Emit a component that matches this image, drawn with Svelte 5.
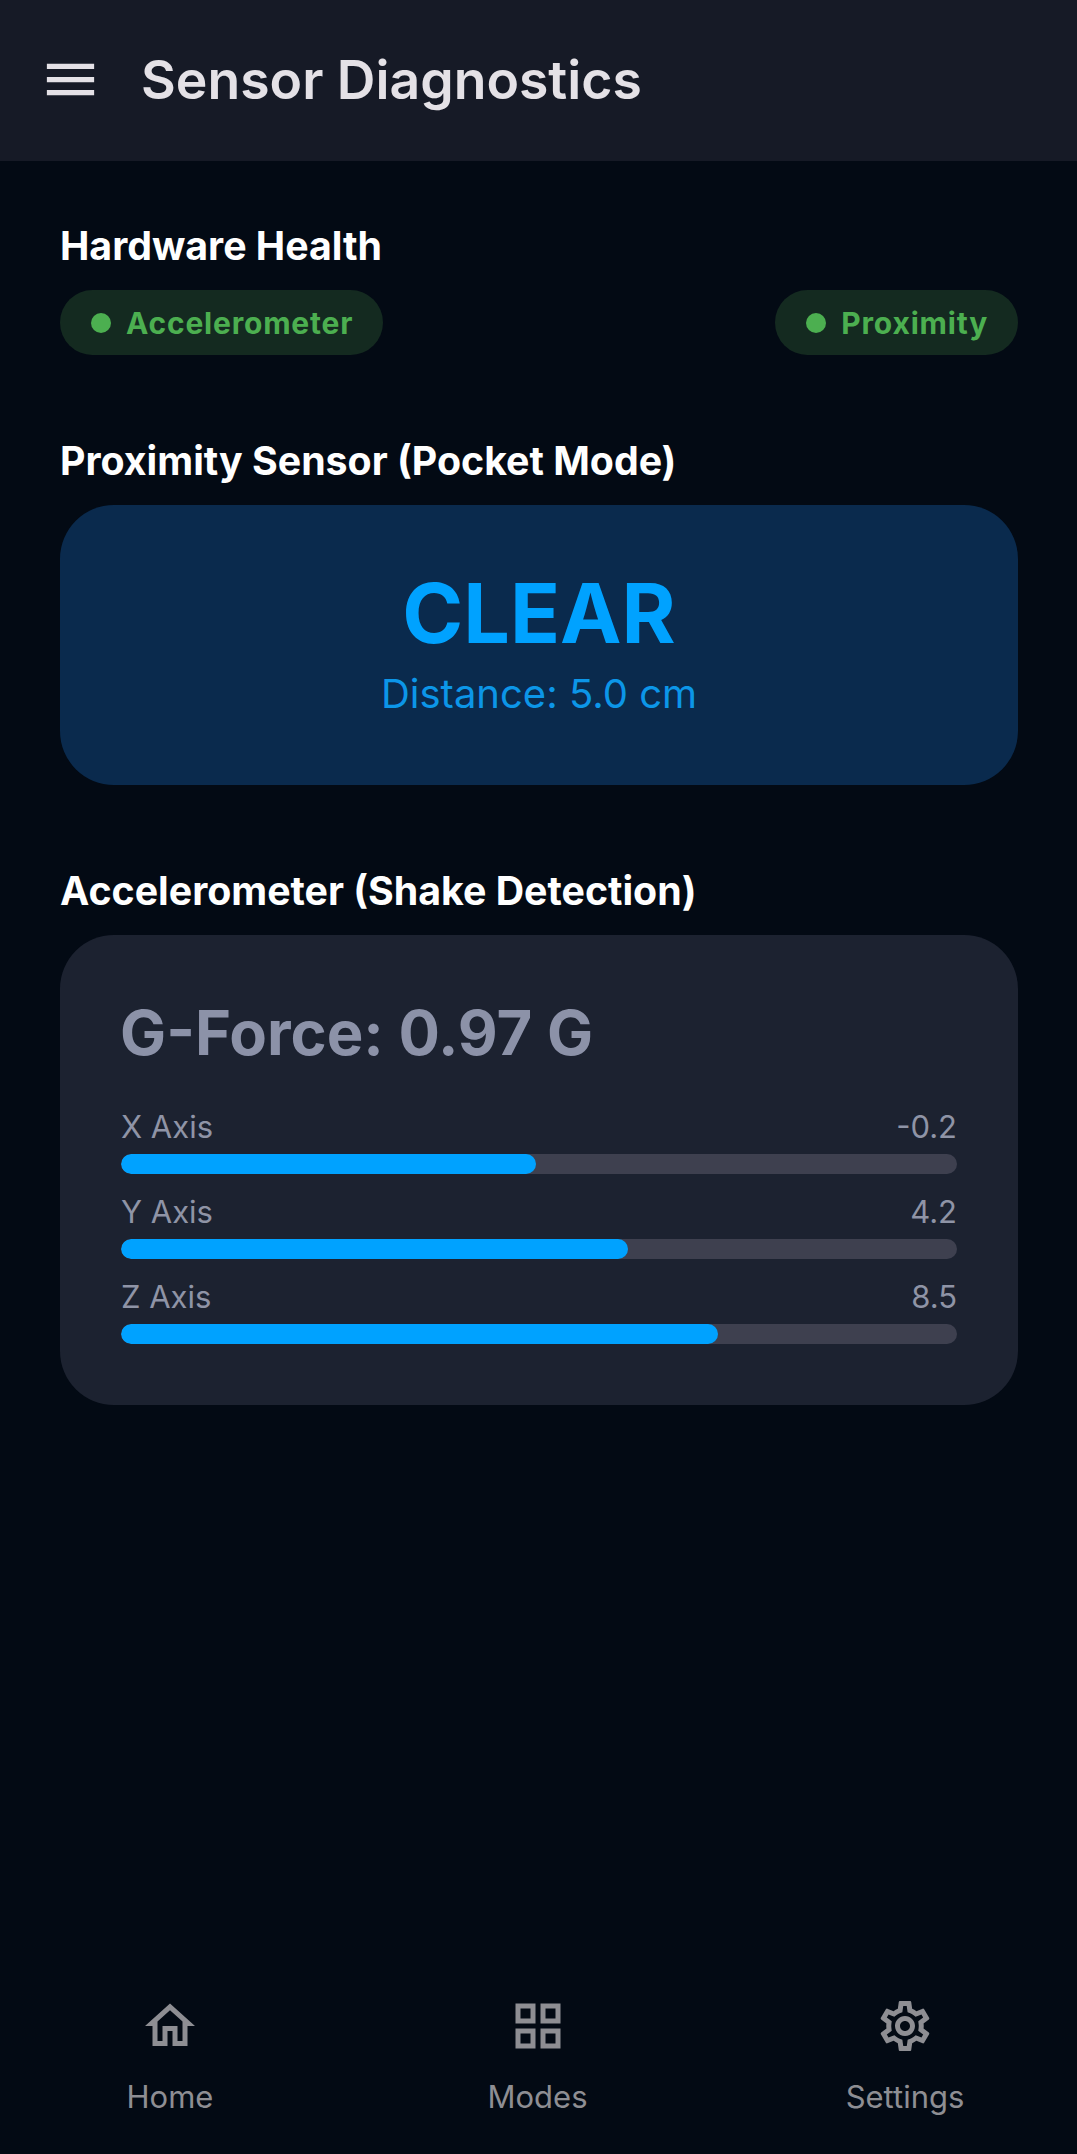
<script>
  const axes = [
    { name: 'X Axis', value: '-0.2', pct: 49.6 },
    { name: 'Y Axis', value: '4.2', pct: 60.6 },
    { name: 'Z Axis', value: '8.5', pct: 71.4 }
  ];
</script>

<div class="page">
  <header class="topbar">
    <svg class="menu" viewBox="0 0 24 24" aria-hidden="true">
      <path d="M3 18h18v-2H3v2zm0-5h18v-2H3v2zm0-7v2h18V6H3z" />
    </svg>
    <h1>Sensor Diagnostics</h1>
  </header>

  <main>
    <section class="health">
      <h2>Hardware Health</h2>
      <div class="pills">
        <div class="pill"><span class="dot"></span>Accelerometer</div>
        <div class="pill"><span class="dot"></span>Proximity</div>
      </div>
    </section>

    <section class="prox">
      <h2>Proximity Sensor (Pocket Mode)</h2>
      <div class="prox-card">
        <div class="state">CLEAR</div>
        <div class="distance">Distance: 5.0 cm</div>
      </div>
    </section>

    <section class="accel">
      <h2>Accelerometer (Shake Detection)</h2>
      <div class="accel-card">
        <div class="gforce">G-Force: 0.97 G</div>
        <div class="axes">
          {#each axes as a}
            <div class="axis">
              <div class="axis-row"><span>{a.name}</span><span>{a.value}</span></div>
              <div class="track"><div class="fill" style="width: {a.pct}%"></div></div>
            </div>
          {/each}
        </div>
      </div>
    </section>
  </main>

  <nav>
    <div class="item">
      <svg viewBox="0 0 24 24" aria-hidden="true"><path d="M12 5.69l5 4.5V18h-2v-6H9v6H7v-7.81l5-4.5M12 3L2 12h3v8h6v-6h2v6h6v-8h3L12 3z" /></svg>
      <span>Home</span>
    </div>
    <div class="item">
      <svg viewBox="0 0 24 24" aria-hidden="true"><path d="M3 3v8h8V3H3zm6 6H5V5h4v4zm-6 4v8h8v-8H3zm6 6H5v-4h4v4zm4-16v8h8V3h-8zm6 6h-4V5h4v4zm-6 4v8h8v-8h-8zm6 6h-4v-4h4v4z" /></svg>
      <span>Modes</span>
    </div>
    <div class="item">
      <svg viewBox="0 0 24 24" aria-hidden="true"><path d="M19.43 12.98c.04-.32.07-.64.07-.98 0-.34-.03-.66-.07-.98l2.11-1.65c.19-.15.24-.42.12-.64l-2-3.46c-.09-.16-.26-.25-.44-.25-.06 0-.12.01-.17.03l-2.49 1c-.52-.4-1.08-.73-1.69-.98l-.38-2.65C14.46 2.18 14.25 2 14 2h-4c-.25 0-.46.18-.49.42l-.38 2.65c-.61.25-1.17.59-1.69.98l-2.49-1c-.06-.02-.12-.03-.18-.03-.17 0-.34.09-.43.25l-2 3.46c-.13.22-.07.49.12.64l2.11 1.65c-.04.32-.07.65-.07.98 0 .33.03.66.07.98l-2.11 1.65c-.19.15-.24.42-.12.64l2 3.46c.09.16.26.25.44.25.06 0 .12-.01.17-.03l2.49-1c.52.4 1.08.73 1.69.98l.38 2.65c.03.24.24.42.49.42h4c.25 0 .46-.18.49-.42l.38-2.65c.61-.25 1.17-.59 1.69-.98l2.49 1c.06.02.12.03.18.03.17 0 .34-.09.43-.25l2-3.46c.12-.22.07-.49-.12-.64l-2.11-1.65zm-1.98-1.71c.04.31.05.52.05.73 0 .21-.02.43-.05.73l-.14 1.13.89.7 1.08.84-.7 1.21-1.27-.51-1.04-.42-.9.68c-.43.32-.84.56-1.25.73l-1.06.43-.16 1.13-.2 1.35h-1.4l-.19-1.35-.16-1.13-1.06-.43c-.43-.18-.83-.41-1.23-.71l-.91-.7-1.06.43-1.27.51-.7-1.21 1.08-.84.89-.7-.14-1.13c-.03-.31-.05-.54-.05-.74s.02-.43.05-.73l.14-1.13-.89-.7-1.08-.84.7-1.21 1.27.51 1.04.42.9-.68c.43-.32.84-.56 1.25-.73l1.06-.43.16-1.13.2-1.35h1.39l.19 1.35.16 1.13 1.06.43c.43.18.83.41 1.23.71l.91.7 1.06-.43 1.27-.51.7 1.21-1.07.85-.89.7.14 1.13zM12 8c-2.21 0-4 1.79-4 4s1.79 4 4 4 4-1.79 4-4-1.79-4-4-4zm0 6c-1.1 0-2-.9-2-2s.9-2 2-2 2 .9 2 2-.9 2-2 2z" /></svg>
      <span>Settings</span>
    </div>
  </nav>
</div>

<style>
  :global(body) { margin: 0; background: #030a14; }
  .page {
    min-height: 2154px;
    display: flex;
    flex-direction: column;
    background: #030a14;
    font-family: Inter, "Liberation Sans", sans-serif;
  }
  .topbar {
    height: 161px;
    display: flex;
    align-items: center;
    gap: 39px;
    padding: 0 0 2px 39px;
    background: #161a26;
    box-sizing: border-box;
  }
  .menu { width: 63px; height: 63px; fill: #e4e1e6; }
  h1 { margin: 0; font-size: 53.500px; font-weight: 600; color: #e4e1e6; }
  main { flex: 1; padding: 0 59px 0 60px; }
  h2 { margin: 0; font-size: 39.300px; line-height: 44px; font-weight: 700; color: #fff; }
  .health { padding-top: 63px; }
  .pills { display: flex; justify-content: space-between; margin-top: 22px; }
  .pill {
    height: 65px;
    display: flex;
    align-items: center;
    gap: 15px;
    padding: 0 30px 0 31px;
    border-radius: 33px;
    background: #142a20;
    color: #4caf50;
    font-size: 30px;
    font-weight: 700;
    letter-spacing: 0.8px;
  }
  .dot { width: 20px; height: 20px; border-radius: 50%; background: #4caf50; }
  .prox { padding-top: 84px; }
  .prox-card {
    margin-top: 22px;
    height: 280px;
    border-radius: 54px;
    background: #0a2a4d;
    box-sizing: border-box;
    padding-top: 58px;
    text-align: center;
  }
  .state { font-size: 82.500px; line-height: 100px; font-weight: 700; color: #00a2ff; }
  .distance { margin-top: 6px; font-size: 40px; line-height: 50px; color: #0c96e8; }
  .accel { padding-top: 84px; }
  .accel-card {
    margin-top: 22px;
    height: 470px;
    border-radius: 54px;
    background: #1c2230;
    box-sizing: border-box;
    padding: 59px 61px 0;
  }
  .gforce { margin-left: -1px; font-size: 61.500px; line-height: 78px; font-weight: 700; color: #8c92a8; }
  .axes { margin-top: 37px; display: flex; flex-direction: column; gap: 20px; }
  .axis-row { display: flex; justify-content: space-between; font-size: 31px; line-height: 36px; color: #8f94a6; }
  .track { margin-top: 9px; height: 20px; border-radius: 10px; background: #3e404f; overflow: hidden; }
  .fill { height: 100%; border-radius: 10px; background: #00a2ff; }
  nav {
    display: flex;
    justify-content: space-between;
    padding: 0 112px 39px 110px;
  }
  .item {
    width: 120px;
    display: flex;
    flex-direction: column;
    align-items: center;
    gap: 23px;
    color: #8e8e93;
    font-size: 31px;
    line-height: 36px;
    white-space: nowrap;
  }
  .item svg { width: 60px; height: 60px; fill: #8e8e93; }
</style>
